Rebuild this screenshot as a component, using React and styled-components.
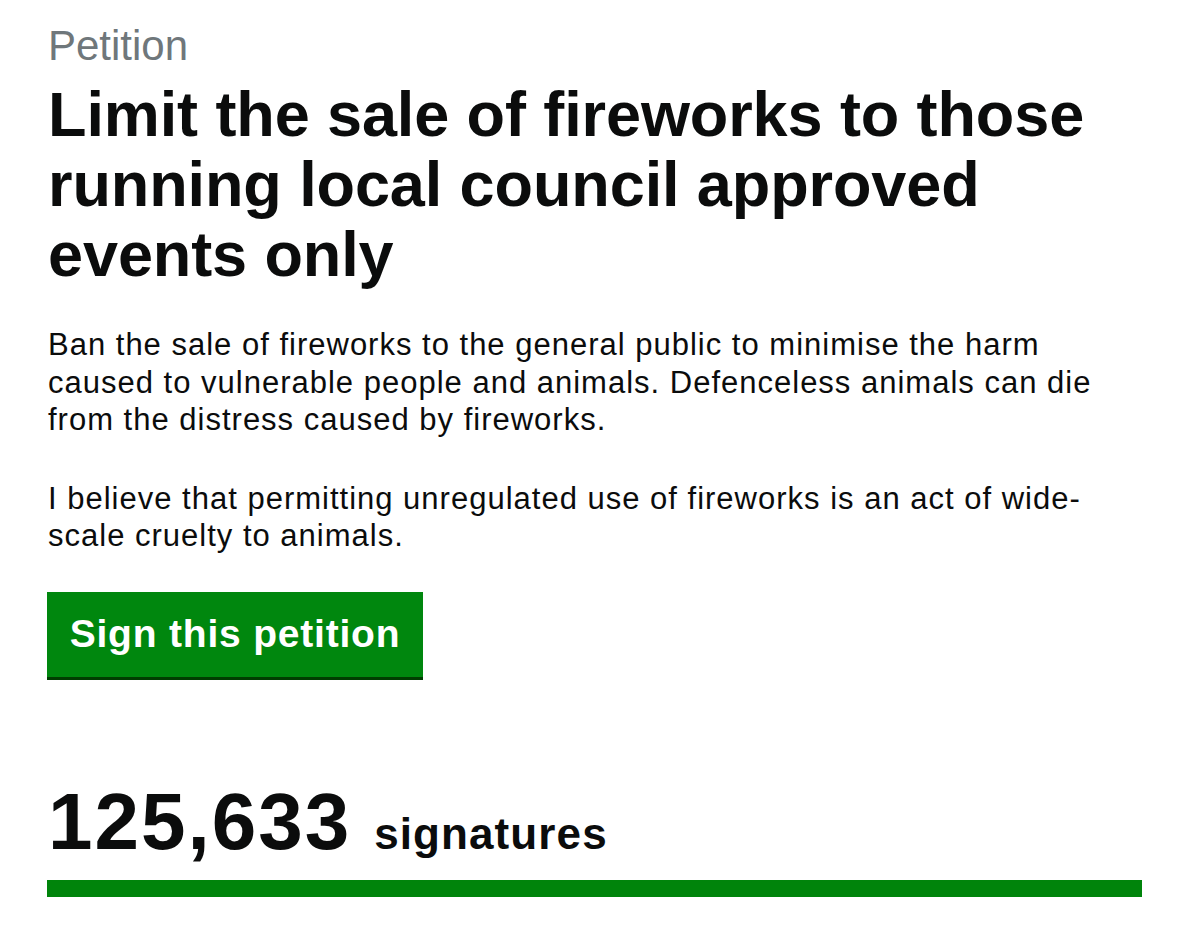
import React from "react";
import styled, { createGlobalStyle } from "styled-components";

const GlobalStyle = createGlobalStyle`
  body {
    margin: 0;
    background: #ffffff;
    font-family: "Liberation Sans", Arial, sans-serif;
    color: #0b0c0c;
  }
`;

const Page = styled.main`
  width: 1096px;
  padding: 22px 0 0 48px;
`;

const Caption = styled.div`
  font-size: 42px;
  line-height: 48px;
  color: #6f777b;
`;

const Title = styled.h1`
  margin: 9px 0 0;
  font-size: 63px;
  line-height: 70px;
  font-weight: 700;
  letter-spacing: -0.1px;
`;

const Para = styled.p`
  margin: ${(p) => (p.first ? "37px" : "0")} 0 0;
  font-size: 31px;
  line-height: 37.5px;
  letter-spacing: 1px;
  & + & {
    margin-top: 41px;
  }
`;

const SignButton = styled.button`
  display: block;
  margin: 37px 0 0 -1px;
  width: 376px;
  height: 85px;
  padding: 0;
  border: none;
  background: #00870e;
  box-shadow: 0 3px 0 #003d00;
  color: #ffffff;
  font-family: inherit;
  font-size: 39px;
  font-weight: 700;
  letter-spacing: 0.8px;
  text-align: center;
`;

const Count = styled.div`
  margin-top: 101px;
  display: flex;
  align-items: baseline;
  gap: 23px;
`;

const Number = styled.span`
  font-size: 80px;
  font-weight: 700;
  line-height: 88px;
  letter-spacing: 2px;
`;

const Unit = styled.span`
  font-size: 44px;
  font-weight: 700;
  letter-spacing: 1.1px;
`;

const Progress = styled.div`
  margin: 14px 0 0 -1px;
  height: 17px;
  width: 1095px;
  background: #e5e5e5;
`;

const Fill = styled.div`
  height: 100%;
  background: #00840b;
`;

export default function App() {
  const signatures = 125633;
  const target = 100000;
  const pct = Math.min(100, (signatures / target) * 100);
  return (
    <>
      <GlobalStyle />
      <Page>
        <Caption>Petition</Caption>
        <Title>
          Limit the sale of fireworks to those running local council approved
          events only
        </Title>
        <Para first>
          Ban the sale of fireworks to the general public to minimise the harm
          caused to vulnerable people and animals. Defenceless animals can die
          from the distress caused by fireworks.
        </Para>
        <Para>
          I believe that permitting unregulated use of fireworks is an act of
          wide-scale cruelty to animals.
        </Para>
        <SignButton>Sign this petition</SignButton>
        <Count>
          <Number>{signatures.toLocaleString("en-GB")}</Number>
          <Unit>signatures</Unit>
        </Count>
        <Progress>
          <Fill style={{ width: `${pct}%` }} />
        </Progress>
      </Page>
    </>
  );
}
